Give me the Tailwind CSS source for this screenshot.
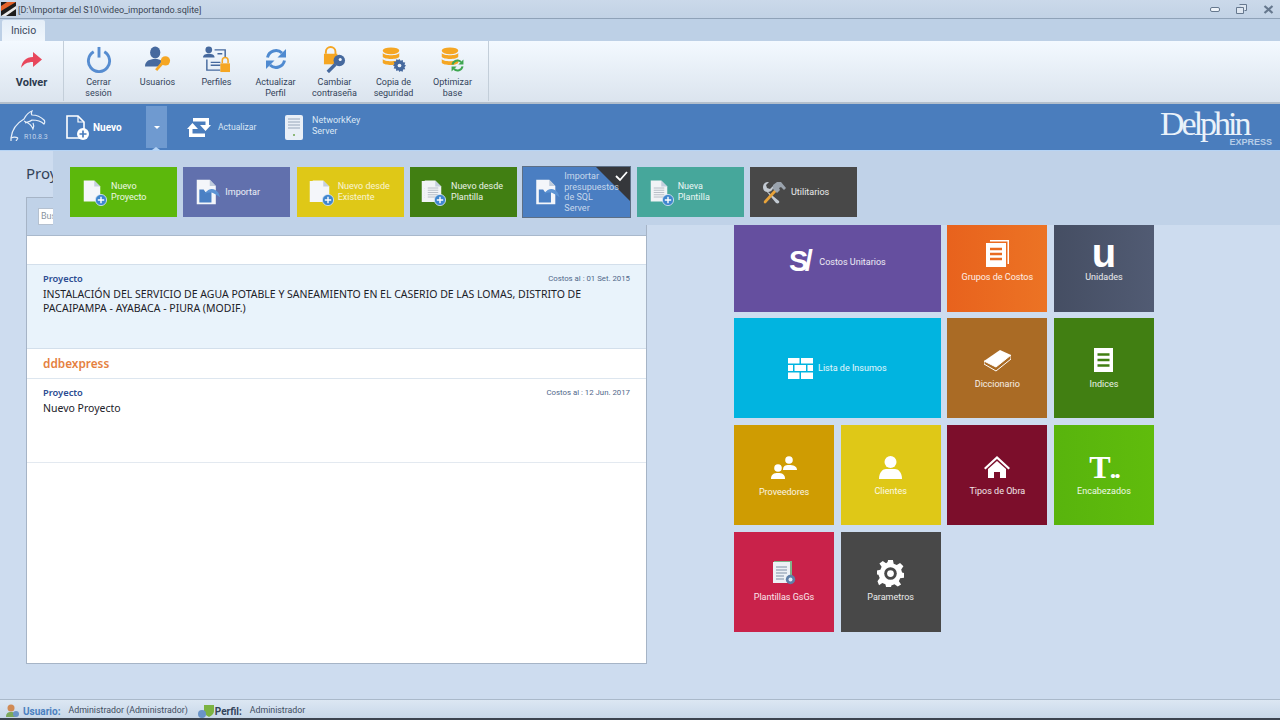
<!DOCTYPE html>
<html lang="es">
<head>
<meta charset="utf-8">
<title>Delphin Express</title>
<script src="https://cdn.jsdelivr.net/npm/@tailwindcss/browser@4"></script>
</head>
<body class="w-[1280px] h-[720px] overflow-hidden bg-[#cddcef] font-['Roboto',sans-serif] text-[9px] text-[#33435a]">
<svg width="0" height="0" class="absolute">
  <defs>
    <symbol id="doc" viewBox="0 0 24 30"><path d="M1 1h14l8 8v20H1z" fill="#f4f6fa"/><path d="M15 1v8h8z" fill="#c4cfdd"/></symbol>
    <symbol id="plus" viewBox="0 0 12 12"><circle cx="6" cy="6" r="5.6" fill="#3f86cf" stroke="#dce9f6" stroke-width=".8"/><path d="M6 2.8v6.4M2.8 6h6.4" stroke="#fff" stroke-width="1.4"/></symbol>
    <symbol id="lines" viewBox="0 0 24 30"><path d="M1 1h14l8 8v20H1z" fill="#f1f3f6"/><path d="M15 1v8h8z" fill="#c4cfdd"/><path d="M5 11h14M5 14h14M5 17h14M5 20h14M5 23h14" stroke="#a5adb8" stroke-width="1"/></symbol>
    <symbol id="imp" viewBox="0 0 28 30"><path d="M1 1h15l7 7v21H1z" fill="#f4f6fa"/><path d="M16 1v7h7z" fill="#bfcbdb"/><path d="M4 12h5l2 3h7v12H4z" fill="#4a80c4"/><path d="M10 17c6-8 12-6 16-1l2 5-5-3c-4-3-8-3-13-1z" fill="#5d94d4"/></symbol>
    <symbol id="disc" viewBox="0 0 24 28"><g fill="#f5a623"><ellipse cx="12" cy="5" rx="11" ry="4.5"/><path d="M1 8c2 4 20 4 22 0v5c-2 4-20 4-22 0z"/><path d="M1 16c2 4 20 4 22 0v5c-2 4-20 4-22 0z"/></g></symbol>
  </defs>
</svg>

<div class="h-[19px] flex items-center bg-gradient-to-b from-[#cbd9ea] to-[#c2d2e5] border-b border-[#8fa2b8] relative">
  <svg class="w-[15px] h-[14px] ml-[1px]" viewBox="0 0 15 14"><rect width="15" height="14" fill="#1c1c1c"/><path d="M0 9 15 0H6L0 4z" fill="#e4622a"/><path d="M0 14 15 4v3L5 14z" fill="#e9e9e9"/></svg>
  <span class="ml-[2px] mt-[3px] text-[#3b4654] leading-none">[D:\Importar del S10\video_importando.sqlite]</span>
  <div class="ml-auto flex items-center gap-[16px] pr-[6px]">
    <svg class="w-[10px] h-[5px]" viewBox="0 0 10 5"><rect x=".5" y=".5" width="9" height="4" rx="1.5" fill="#eef3f9" stroke="#66788e"/></svg>
    <svg class="w-[11px] h-[10px]" viewBox="0 0 11 10"><path d="M3.5.5h7v6h-2M.5 3.5h7v6h-7z" fill="#dfe7f1" stroke="#66788e"/></svg>
    <svg class="w-[11px] h-[9px]" viewBox="0 0 11 9"><path d="M1.5 1l8 7M9.5 1l-8 7" stroke="#66788e" stroke-width="2.2"/></svg>
  </div>
</div>

<div class="h-[22px] bg-[#bdd0e6] flex items-end pl-[2px]">
  <div class="w-[43px] h-[21px] bg-gradient-to-b from-[#e4eef8] to-[#f0f6fc] rounded-t-[2px] flex items-center justify-center text-[10.5px] text-[#3d4a5c]">Inicio</div>
</div>

<div class="h-[63px] flex bg-gradient-to-b from-[#f3f9ff] to-[#dbe4ee] border-b-2 border-[#b3bfcc]">
  <div class="w-[64px] h-[60px] border-r border-[#c3ced9] flex flex-col items-center">
    <svg class="w-[21px] h-[17px] mt-[11px]" viewBox="0 0 21 17"><path d="M0 16C1 9 5 5 12 5V0l9 7.5-9 7.5v-5C6 10 3 12 0 16z" fill="#e8475c"/></svg>
    <span class="mt-[7px] text-[11px] font-bold text-[#2c3a4e] leading-[14px]">Volver</span>
  </div>
  <div class="flex pl-[5px] w-[425px] h-[60px] border-r border-[#c3ced9] leading-[11px] text-center">
    <div class="w-[59px] flex flex-col items-center">
      <div class="h-[36px] flex items-center"><svg class="w-[26px] h-[27px]" viewBox="0 0 26 28"><path d="M7.5 6a11 11 0 1 0 11 0" fill="none" stroke="#568cd0" stroke-width="3"/><path d="M13 1v11" stroke="#568cd0" stroke-width="3"/></svg></div>
      <span>Cerrar<br>sesión</span>
    </div>
    <div class="w-[59px] flex flex-col items-center">
      <div class="h-[36px] flex items-center"><svg class="w-[26px] h-[26px]" viewBox="0 0 28 28"><ellipse cx="11" cy="7" rx="5.5" ry="6.5" fill="#46699e"/><path d="M0 22c0-6 5-8 11-8 3 0 5 .5 7 2l-3 6z" fill="#46699e"/><circle cx="22" cy="16" r="5" fill="#f5a623"/><path d="M19 18l-7 8" stroke="#f5a623" stroke-width="3"/></svg></div>
      <span>Usuarios</span>
    </div>
    <div class="w-[59px] flex flex-col items-center">
      <div class="h-[36px] flex items-center"><svg class="w-[27px] h-[27px]" viewBox="0 0 28 28"><circle cx="6" cy="4" r="3.5" fill="#46699e"/><path d="M0 12c0-3 3-4 6-4s6 1 6 4z" fill="#46699e"/><path d="M12 4h11v8M4 14v11h14M8 17h10M8 20h10M15 8h5" stroke="#46699e" stroke-width="1.5" fill="none"/><rect x="18" y="18" width="10" height="9" fill="#f5a623"/><path d="M20 18v-3a3 3 0 0 1 6 0v3" fill="none" stroke="#f5a623" stroke-width="1.6"/></svg></div>
      <span>Perfiles</span>
    </div>
    <div class="w-[59px] flex flex-col items-center">
      <div class="h-[36px] flex items-center"><svg class="w-[22px] h-[22px]" viewBox="0 0 22 22"><path d="M2.5 9.5A8.7 8.7 0 0 1 17 5" fill="none" stroke="#4f8ad0" stroke-width="3"/><path d="M21 1v8.500h-8.500z" fill="#4f8ad0"/><path d="M19.500 12.500A8.700 8.700 0 0 1 5 17" fill="none" stroke="#4f8ad0" stroke-width="3"/><path d="M1 21v-8.500h8.500z" fill="#4f8ad0"/></svg></div>
      <span>Actualizar<br>Perfil</span>
    </div>
    <div class="w-[59px] flex flex-col items-center">
      <div class="h-[36px] flex items-center"><svg class="w-[23px] h-[27px]" viewBox="0 0 24 28"><path d="M3 8V6a5 5 0 0 1 10 0v3" fill="none" stroke="#f5a623" stroke-width="2"/><rect x="1" y="8" width="14" height="11" fill="#f5a623"/><circle cx="17" cy="15" r="6" fill="#46699e"/><circle cx="18" cy="14" r="1.600" fill="#f3f7fb"/><path d="M13 19l-8 8" stroke="#46699e" stroke-width="3.500"/></svg></div>
      <span>Cambiar<br>contraseña</span>
    </div>
    <div class="w-[59px] flex flex-col items-center">
      <div class="h-[36px] flex items-center"><div class="relative w-[24px] h-[25px]">
        <svg class="w-[18px] h-[21px]"><use href="#disc"/></svg>
        <svg class="absolute right-0 bottom-0 w-[13px] h-[13px]" viewBox="0 0 14 14"><path d="M7 0l1.200 2 2.300-.8.300 2.400 2.400.3-.8 2.300L14 7l-1.600 1.800.8 2.300-2.400.3-.3 2.400-2.300-.8L7 14l-1.200-2-2.300.8-.3-2.400-2.400-.3.8-2.300L0 7l1.600-1.800-.8-2.300 2.400-.3.300-2.400 2.300.8z" fill="#46699e"/><circle cx="7" cy="7" r="2" fill="#eef3f8"/></svg>
      </div></div>
      <span>Copia de<br>seguridad</span>
    </div>
    <div class="w-[59px] flex flex-col items-center">
      <div class="h-[36px] flex items-center"><div class="relative w-[23px] h-[25px]">
        <svg class="w-[18px] h-[21px]"><use href="#disc"/></svg>
        <svg class="absolute right-0 bottom-0 w-[13px] h-[13px]" viewBox="0 0 22 22"><path d="M2.500 9.500A8.700 8.700 0 0 1 17 5" fill="none" stroke="#3ea650" stroke-width="3.500"/><path d="M21 1v8.500h-8.500z" fill="#3ea650"/><path d="M19.500 12.500A8.700 8.700 0 0 1 5 17" fill="none" stroke="#3ea650" stroke-width="3.500"/><path d="M1 21v-8.500h8.500z" fill="#3ea650"/></svg>
      </div></div>
      <span>Optimizar<br>base</span>
    </div>
  </div>
</div>

<div class="h-[46px] bg-[#4a7dbd] flex items-center relative text-white">
  <div class="w-[36px] ml-[10px] h-[36px] relative">
    <svg class="absolute left-0 top-0 w-[36px] h-[32px]" viewBox="0 0 36 32" fill="none" stroke="#e8f0f9" stroke-width="1.200"><path d="M1 29C2 20 7 14 14 10c2-4 5-7 8-8-1 2-1 3 0 4 5 0 9 2 12 5 1 1 1 3 0 4-3-3-8-4-12-4-2 2-5 2-7 3M14 12c5 2 8 5 9 8 1-2 1-4 0-6"/><path d="M1 29v3M8 29l-2 3M1 29c2-1 5-1 7 0"/></svg>
    <span class="absolute left-[14px] top-[25px] text-[7px] leading-none text-[#c2d4ea]">R10.8.3</span>
  </div>
  <div class="relative w-[23px] h-[25px] ml-[20px]">
    <svg class="w-[19px] h-[24px]" viewBox="0 0 19 24"><path d="M1 1h11l6 6v16H1z" fill="none" stroke="#fff" stroke-width="1.600"/><path d="M12 1v6h6" fill="none" stroke="#fff" stroke-width="1.200"/></svg>
    <svg class="absolute right-0 bottom-0 w-[12px] h-[12px]" viewBox="0 0 12 12"><circle cx="6" cy="6" r="6" fill="#fff"/><path d="M6 2.500v7M2.500 6h7" stroke="#4a7dbd" stroke-width="1.700"/></svg>
  </div>
  <span class="ml-[4px] w-[30px] text-[10px] font-bold">Nuevo</span>
  <div class="ml-[23px] w-[21px] h-[42px] bg-[#6f9ad0] flex items-center justify-center relative">
    <span class="w-0 h-0 border-x-[3px] border-x-transparent border-t-[3px] border-t-white"></span>
    <span class="absolute -bottom-[2px] left-[6px] w-0 h-0 border-x-[4px] border-x-transparent border-b-[3px] border-b-[#b6d4f5]"></span>
  </div>
  <svg class="ml-[20px] w-[24px] h-[22px]" viewBox="0 0 24 22" fill="#fff"><path d="M6 2h16l0 8h-3.500V5.500H6zM18 21H2v-8h3.500v4.500H18z"/><path d="M0 13l5.500-6 5.500 6zM13 9l5.500 6 5.500-6z"/></svg>
  <span class="ml-[7px] w-[38px] whitespace-nowrap text-[8.600px] text-[#dbe7f5]">Actualizar</span>
  <svg class="ml-[29px] w-[18px] h-[25px]" viewBox="0 0 18 25"><rect width="18" height="25" rx="2" fill="#e9eff7"/><path d="M3 4h12M3 7h12M3 10h12M3 13h12" stroke="#97a6b9"/><circle cx="9" cy="20" r="1" fill="#6fa64f"/></svg>
  <span class="ml-[9px] -mt-[3px] leading-[11px] text-[#dbe7f5]">NetworkKey<br>Server</span>
  <div class="ml-auto mr-[8px] w-[112px] h-[44px] flex flex-col items-end">
    <span class="w-full font-['Liberation_Serif',serif] text-[34px] leading-[37px] tracking-[-3px] text-[#eaf2fa]">Delphin</span>
    <span class="-mt-[4px] font-['Liberation_Sans',sans-serif] text-[9px] leading-[9px] font-bold text-[#b7cde8]">EXPRESS</span>
  </div>
</div>

<div class="h-[549px] flex relative border-t border-[#b6d4f5]">
  <div class="absolute left-[53px] right-0 top-0 h-[74px] bg-[#c0d2e8] z-10 pt-[16px] pl-[17px] flex gap-[6.330px] leading-[11px] text-white/90">
    <div class="w-[107px] h-[50px] bg-[#5cb80c] flex items-center pl-[13px] gap-[4px]">
      <div class="relative w-[24px] h-[28px]"><svg class="w-[18px] h-[26px]"><use href="#doc"/></svg><svg class="absolute right-0 bottom-0 w-[12px] h-[12px]"><use href="#plus"/></svg></div>
      <span>Nuevo<br>Proyecto</span>
    </div>
    <div class="w-[107px] h-[50px] bg-[#6170ad] flex items-center pl-[12px] gap-[4px]">
      <svg class="w-[26px] h-[26px]"><use href="#imp"/></svg>
      <span>Importar</span>
    </div>
    <div class="w-[107px] h-[50px] bg-[#dfc817] flex items-center pl-[12px] gap-[4px] text-white/80">
      <div class="relative w-[25px] h-[28px]"><svg class="absolute left-0 top-[1px] w-[18px] h-[25px]"><use href="#doc"/></svg><svg class="absolute left-[3px] top-0 w-[18px] h-[26px]"><use href="#doc"/></svg><svg class="absolute right-0 bottom-0 w-[12px] h-[12px]"><use href="#plus"/></svg></div>
      <span>Nuevo desde<br>Existente</span>
    </div>
    <div class="w-[107px] h-[50px] bg-[#417f12] flex items-center pl-[11px] gap-[5px]">
      <div class="relative w-[25px] h-[28px]"><svg class="absolute left-0 top-[1px] w-[18px] h-[25px]"><use href="#lines"/></svg><svg class="absolute left-[3px] top-0 w-[18px] h-[26px]"><use href="#lines"/></svg><svg class="absolute right-0 bottom-0 w-[12px] h-[12px]"><use href="#plus"/></svg></div>
      <span>Nuevo desde<br>Plantilla</span>
    </div>
    <div class="w-[109px] h-[52px] -mt-[1px] -mx-[1px] bg-[#4a7ec2] border border-[#5d6f85] flex items-center pl-[12px] gap-[4px] relative text-white/70 overflow-hidden">
      <svg class="absolute right-0 top-0 w-[34px] h-[34px]" viewBox="0 0 34 34"><path d="M0 0h34v34z" fill="#35373b"/><path d="M20 9l4 4 7-8" fill="none" stroke="#fff" stroke-width="1.800"/></svg>
      <svg class="relative w-[25px] h-[26px] shrink-0"><use href="#imp"/></svg>
      <span class="relative leading-[10.500px]">Importar<br>presupuestos<br>de SQL<br>Server</span>
    </div>
    <div class="w-[107px] h-[50px] bg-[#46a79b] flex items-center pl-[13px] gap-[4px]">
      <div class="relative w-[24px] h-[28px]"><svg class="w-[18px] h-[26px]"><use href="#lines"/></svg><svg class="absolute right-0 bottom-0 w-[12px] h-[12px]"><use href="#plus"/></svg></div>
      <span>Nueva<br>Plantilla</span>
    </div>
    <div class="w-[107px] h-[50px] bg-[#484848] flex items-center pl-[11px] gap-[5px]">
      <svg class="w-[25px] h-[23px]" viewBox="0 0 25 23"><path d="M2 6a5 5 0 0 1 6-5L5 4l1 3 3 1 3-3a5 5 0 0 1-5 6l11 9c1 2-1 3-3 2L6 11A5 5 0 0 1 2 6z" fill="#c3cad2"/><path d="M3 20L14 8l2 2L5 22c-1 1-3 0-2-2z" fill="#e8a33a"/><path d="M12 4l4-3h4l5 6-2 2-3-3-2 1 1 2-3 3-4-4z" fill="#9aa3ad"/></svg>
      <span>Utilitarios</span>
    </div>
  </div>

  <div class="pl-[26px] w-[647px] shrink-0 flex flex-col">
    <div class="h-[46px] pt-[12px] font-['Noto_Sans',sans-serif] text-[15px] leading-[20px] text-[#33435a]">Proyectos</div>
    <div class="h-[467px] bg-white border border-[#a6b4c6] flex flex-col">
      <div class="h-[38px] bg-[#c0d2e8] border-b border-[#a9b9cc] pl-[11px] pt-[10px] shrink-0">
        <div class="w-[90px] h-[17px] bg-white border border-[#b5c1d0] pl-[2px] leading-[15px] text-[#8a94a1]">Buscar</div>
      </div>
      <div class="h-[29px] shrink-0 border-b border-[#d3dfeb]"></div>
      <div class="h-[84px] shrink-0 bg-[#e9f3fb] border-b border-[#d3dfeb] px-[16px] pt-[7px] font-['Noto_Sans',sans-serif]">
        <div class="flex justify-between items-center h-[14px]"><span class="text-[9.300px] font-semibold text-[#2d4c92]">Proyecto</span><span class="font-['Roboto',sans-serif] text-[7.800px] text-[#51688a]">Costos al : 01 Set. 2015</span></div>
        <p class="mt-[1px] text-[10.500px] leading-[14px] text-[#1c2128]">INSTALACIÓN DEL SERVICIO DE AGUA POTABLE Y SANEAMIENTO EN EL CASERIO DE LAS LOMAS, DISTRITO DE PACAIPAMPA - AYABACA - PIURA (MODIF.)</p>
      </div>
      <div class="h-[30px] shrink-0 border-b border-[#dde6ef] px-[16px] flex items-center font-['Noto_Sans',sans-serif] text-[11.800px] font-semibold text-[#e5813f]">ddbexpress</div>
      <div class="h-[84px] shrink-0 border-b border-[#e3e9f0] px-[16px] pt-[7px] font-['Noto_Sans',sans-serif]">
        <div class="flex justify-between items-center h-[14px]"><span class="text-[9.300px] font-semibold text-[#2d4c92]">Proyecto</span><span class="font-['Roboto',sans-serif] text-[7.800px] text-[#51688a]">Costos al : 12 Jun. 2017</span></div>
        <p class="mt-[1px] text-[10.500px] leading-[14px] text-[#1c2128]">Nuevo Proyecto</p>
      </div>
    </div>
  </div>

  <div class="ml-[87px] mt-[60.670px] grid grid-cols-[100px_100px_100px_100px] grid-rows-[100px_100px_100px_100px] gap-x-[6.660px] gap-y-[6.670px] h-fit text-white/90 leading-[12px]">
    <div class="col-span-2 bg-[#654f9f] flex items-center justify-center gap-[7px]"><span class="font-['Liberation_Sans',sans-serif] font-bold text-[29px] leading-[27px] tracking-[-3.500px] text-white">S/</span><span class="ml-[3px]">Costos Unitarios</span></div>
    <div class="bg-gradient-to-r from-[#e8621d] to-[#ec7324] flex flex-col items-center justify-center gap-[4px]">
      <svg class="w-[23px] h-[27px]" viewBox="0 0 23 27"><path d="M4 0h19v24h-1.500V1.500H4z" fill="#fff"/><path d="M0 3h20v24H0z" fill="#fff"/><path d="M4 9h12M4 14h12M4 19h12" stroke="#e96a20" stroke-width="2.600"/></svg>
      <span>Grupos de Costos</span>
    </div>
    <div class="bg-gradient-to-r from-[#454e63] to-[#515b73] flex flex-col items-center justify-center">
      <span class="font-['Liberation_Sans',sans-serif] font-bold text-[40px] leading-[26px] h-[27px] text-white">u</span>
      <span class="mt-[4px]">Unidades</span>
    </div>
    <div class="col-span-2 bg-[#01b4e0] flex items-center justify-center gap-[5px]">
      <svg class="w-[25px] h-[21px]" viewBox="0 0 25 21" fill="#fff"><path d="M0 0h11.500v5.500H0zM13 0h12v5.500H13zM0 7h5v6H0zM6.500 7H18v6H6.500zM19.500 7H25v6h-5.500zM0 14.500h11.500V21H0zM13 14.500h12V21H13z"/></svg>
      <span>Lista de Insumos</span>
    </div>
    <div class="bg-[#aa6b25] flex flex-col items-center justify-center gap-[6px] pt-[3px]">
      <svg class="w-[27px] h-[22px]" viewBox="0 0 27 22"><path d="M0 11L16 0l11 5-15 12z" fill="#fff"/><path d="M0 11v3l12 7 15-12V5L12 17z" fill="none" stroke="#fff" stroke-width="1"/></svg>
      <span>Diccionario</span>
    </div>
    <div class="bg-[#417f12] flex flex-col items-center justify-center gap-[6px] pt-[2px]">
      <svg class="w-[19px] h-[24px]" viewBox="0 0 19 24"><path d="M0 0h19v24H0z" fill="#fff"/><path d="M3.500 6.500h12M3.500 12h12M3.500 17.500h12" stroke="#417f12" stroke-width="2.500"/></svg>
      <span>Indices</span>
    </div>
    <div class="bg-[#cf9c02] flex flex-col items-center justify-center gap-[7px] pt-[4px]">
      <svg class="w-[26px] h-[23px]" viewBox="0 0 26 23" fill="#fff"><circle cx="18" cy="4" r="3.800"/><path d="M12 14c0-4 2-5 6-5s8 1 8 5z"/><circle cx="7" cy="12" r="3.800"/><path d="M0 23c0-5 3-6 7-6s7 1 7 6z"/></svg>
      <span>Proveedores</span>
    </div>
    <div class="bg-[#dfc817] flex flex-col items-center justify-center gap-[6px] pt-[3px]">
      <svg class="w-[23px] h-[23px]" viewBox="0 0 23 23" fill="#fff"><circle cx="11.500" cy="6" r="6"/><path d="M0 23c0-7 4-10 7-10h9c3 0 7 3 7 10z"/></svg>
      <span>Clientes</span>
    </div>
    <div class="bg-[#7c0e2b] flex flex-col items-center justify-center gap-[7px] pt-[3px]">
      <svg class="w-[26px] h-[22px]" viewBox="0 0 26 22" fill="#fff"><path d="M13 0L0 12l1.500 1.500L13 3l11.500 10.500L26 12z"/><path d="M4 13l9-8 9 8v9h-6v-6h-6v6H4z"/></svg>
      <span>Tipos de Obra</span>
    </div>
    <div class="bg-gradient-to-r from-[#58b40d] to-[#60bc0c] flex flex-col items-center justify-center gap-[6px] pt-[3px]">
      <span class="font-['Liberation_Serif',serif] font-bold text-[32px] leading-[23px] h-[23px] text-white">T<span class="text-[26px] -ml-[1px] tracking-[-2px]">..</span></span>
      <span>Encabezados</span>
    </div>
    <div class="bg-[#c9224a] flex flex-col items-center justify-center gap-[6px]">
      <div class="relative w-[23px] h-[24px]">
        <svg class="w-[19px] h-[22px]" viewBox="0 0 19 22"><rect x="1" y="0" width="18" height="20" fill="#7fb38a"/><rect y="1" width="17" height="21" fill="#edf1f6"/><path d="M3 6h11M3 9h11M3 12h11M3 15h8M3 18h8" stroke="#7f8fa5"/></svg>
        <svg class="absolute right-0 bottom-0 w-[11px] h-[11px]" viewBox="0 0 14 14"><circle cx="7" cy="7" r="6" fill="#5f7fa8"/><circle cx="7" cy="7" r="2.500" fill="#e4ebf3"/></svg>
      </div>
      <span>Plantillas GsGs</span>
    </div>
    <div class="bg-[#484848] flex flex-col items-center justify-center gap-[4px]">
      <svg class="w-[27px] h-[27px]" viewBox="0 0 28 28"><path d="M11.500 0h5l.8 4 3.200 1.300 3.400-2.300 3.500 3.500-2.300 3.400L26 13l2 .5v5l-4 .3-1.300 3.200 2.300 3.400-3.500 2-3.400-2.300-3.200 1.300-.4 2h-5l-.8-3.300-3.200-1.300-3.400 2.300L.5 22l2.300-3.400L1.500 15.400 0 15v-4l3.500-.8 1.300-3.200L2.500 3.600 6 1l3.400 2.300L11 2z" fill="#fff"/><circle cx="14" cy="14" r="6.500" fill="#484848"/><circle cx="14" cy="14" r="3.500" fill="#fff"/></svg>
      <span>Parametros</span>
    </div>
  </div>
</div>

<div class="h-[21px] border-t border-[#aab9ca] bg-gradient-to-b from-[#dce7f3] to-[#c6d6e8] flex items-center pl-[5px] pt-[2px] relative text-[#3f4c5e]">
  <svg class="w-[15px] h-[14px]" viewBox="0 0 15 14"><circle cx="6" cy="4" r="3.500" fill="#d08a55"/><path d="M1 13c0-4 2-5 5-5s5 1 5 5z" fill="#7ba85c"/><circle cx="11" cy="10" r="3" fill="#6a94c8"/></svg>
  <span class="ml-[3px] text-[10px] font-bold text-[#4a80c0]">Usuario:</span>
  <span class="ml-[8px] text-[8.800px]">Administrador (Administrador)</span>
  <svg class="ml-[10px] w-[16px] h-[15px]" viewBox="0 0 16 15"><path d="M6 1h10v6c0 3-3 5-5 6-2-1-5-3-5-6z" fill="#7cb342"/><circle cx="4" cy="10" r="4" fill="#6a94c8"/></svg>
  <span class="ml-[1px] text-[10px] font-bold text-[#33435a]">Perfil:</span>
  <span class="ml-[8px] text-[8.800px]">Administrador</span>
  <div class="absolute left-0 right-0 bottom-0 h-[2px] bg-[#3c4450]"></div>
</div>
</body>
</html>
